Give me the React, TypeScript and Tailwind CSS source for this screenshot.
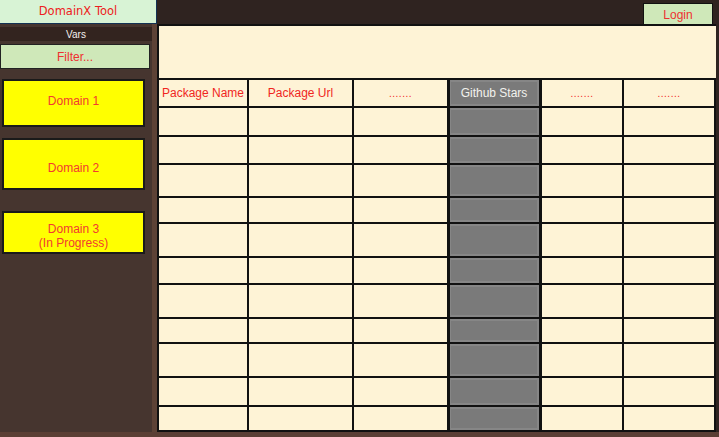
import React from 'react';

const ROWS = [29, 28, 33, 26, 34, 27, 34, 25, 34, 29, 25];

const COLS = [
  { label: 'Package Name', w: 'w-[90px]' },
  { label: 'Package Url', w: 'w-[105px]' },
  { label: '.......', w: 'w-[95px]' },
  { label: 'Github Stars', w: 'w-[93px]', gray: true },
  { label: '.......', w: 'w-[82px]' },
  { label: '.......', w: 'w-[92px]' },
];

const font = { fontFamily: '"Liberation Sans", Arial, sans-serif' };

function Cell({ col, header, h }: { col: (typeof COLS)[number]; header?: boolean; h: number }) {
  const base = `${col.w} shrink-0 border-r-2 border-b-2 border-[#111] flex items-center justify-center`;
  if (col.gray) {
    return (
      <div
        className={`${base} border-r-[3px] bg-[#7a7a7a] shadow-[inset_1px_0_0_#111,inset_0_0_0_2px_#868686]`}
        style={{ height: h }}
      >
        {header && <span className="text-[12px] text-[#f2f2ee]">{col.label}</span>}
      </div>
    );
  }
  return (
    <div className={`${base} bg-[#fef3d6]`} style={{ height: h }}>
      {header && (
        <span className={`text-[#f0261e] ${col.label.startsWith('.') ? 'text-[10px] tracking-[0.5px]' : 'text-[12px]'}`}>
          {col.label}
        </span>
      )}
    </div>
  );
}

function DomainBox({ children, cls }: { children: React.ReactNode; cls: string }) {
  return (
    <div
      className={`ml-[2px] w-[143px] bg-[#ffff00] border-2 border-[#1a1a1a] flex flex-col items-center justify-center text-[12px] leading-[14px] text-[#f23a30] text-center ${cls}`}
    >
      {children}
    </div>
  );
}

export default function App() {
  return (
    <div className="w-[719px] h-[437px] bg-[#2f2320] flex flex-col overflow-hidden" style={font}>
      {/* top bar */}
      <div className="h-[24px] flex shrink-0">
        <div
          className="w-[157px] h-[24px] bg-[#d8f3d5] border-r border-b border-[#123153] flex items-center justify-center text-[#ee2020]"
          style={{ fontFamily: '"DejaVu Sans", Verdana, sans-serif', fontSize: 11.5 }}
        >
          DomainX Tool
        </div>
        <div className="flex-1" />
        <div className="mt-[3px] mr-[6px] w-[70px] h-[21px] bg-[#cfe8b9] border border-b-0 border-[#111] flex items-center justify-center pt-[2px] text-[12px] text-[#ee3030]">
          Login
        </div>
      </div>

      <div className="flex h-[408px] shrink-0">
        {/* sidebar */}
        <div className="w-[157px] flex shrink-0">
          <div className="w-[152px] bg-[#46352f] flex flex-col pt-[3px]">
            <div className="h-[14px] bg-[#33241f] flex items-center justify-center text-[10px] text-[#f4f0ee]">Vars</div>
            <div className="mt-[3px] w-[150px] h-[25px] bg-[#cfe8b9] border border-[#222] flex items-center justify-center text-[12px] text-[#ee3030]">
              Filter...
            </div>
            <DomainBox cls="mt-[10px] h-[48px] pb-[5px]">Domain 1</DomainBox>
            <DomainBox cls="mt-[11px] h-[52px] pt-[8px]">Domain 2</DomainBox>
            <DomainBox cls="mt-[21px] h-[43px] pt-[6px]">
              <span>Domain 3</span>
              <span>(In Progress)</span>
            </DomainBox>
          </div>
          <div className="w-[5px] bg-[#5d4236]" />
        </div>

        {/* main */}
        <div className="w-[559px] shrink-0 bg-[#fef3d6] border-l-2 border-t-2 border-[#111] flex flex-col">
          <div className="h-[54px] border-b-2 border-[#111] shrink-0" />
          <div className="flex">
            {COLS.map((c, i) => (
              <Cell key={i} col={c} header h={28} />
            ))}
          </div>
          {ROWS.map((h, r) => (
            <div key={r} className="flex">
              {COLS.map((c, i) => (
                <Cell key={i} col={c} h={h} />
              ))}
            </div>
          ))}
        </div>
        <div className="flex-1 bg-[#2f2320]" />
      </div>

      <div className="h-[5px] bg-[#5b3f35] shrink-0" />
    </div>
  );
}
